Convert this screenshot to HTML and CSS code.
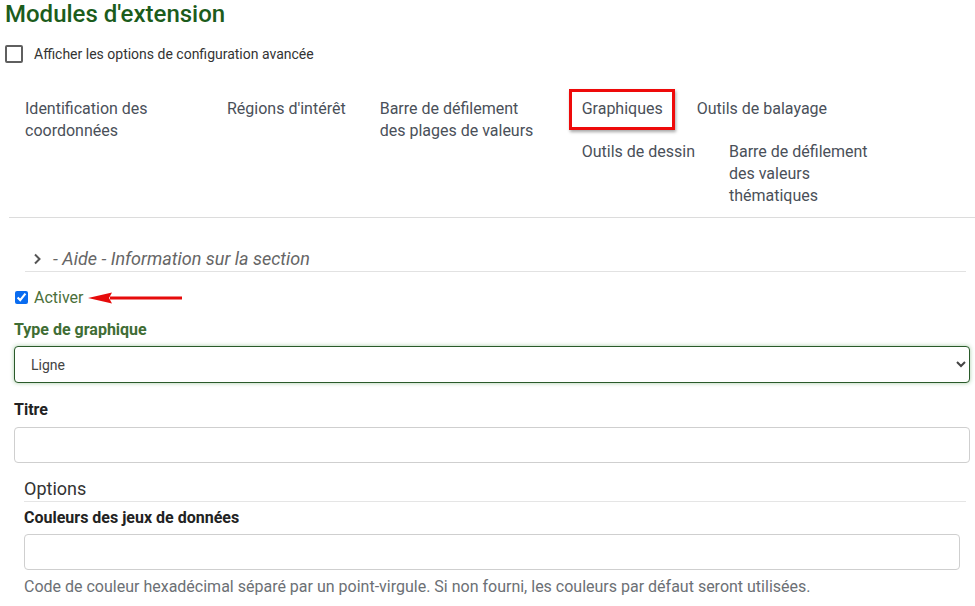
FILE: index.html
```html
<!DOCTYPE html>
<html lang="fr">
<head>
<meta charset="utf-8">
<title>Modules d'extension</title>
<link rel="stylesheet" href="styles.css">
</head>
<body>
<div class="page">
  <h1 class="title">Modules d'extension</h1>
  <label class="adv"><span class="adv-box"></span><span>Afficher les options de configuration avancée</span></label>

  <div class="tabs">
    <ul class="tab-list">
      <li class="tab tab-wide">Identification des<br>coordonnées</li>
      <li class="tab">Régions d'intérêt</li>
      <li class="tab tab-wide">Barre de défilement<br>des plages de valeurs</li>
      <li class="tab tab-active">Graphiques<span class="mark"></span></li>
      <li class="tab">Outils de balayage</li>
      <li class="tab">Outils de dessin</li>
      <li class="tab tab-wide">Barre de défilement<br>des valeurs<br>thématiques</li>
    </ul>
  </div>

  <div class="panel">
    <div class="aide">
      <svg class="chev" width="10" height="12" viewBox="0 0 10 12"><path d="M3 1.5 L7.5 6 L3 10.5" fill="none" stroke="#555" stroke-width="2"/></svg>
      <span class="aide-text">- Aide - Information sur la section</span>
    </div>

    <div class="enable">
      <input type="checkbox" class="enable-check" checked>
      <span class="enable-text">Activer</span>
      <svg class="arrow" width="100" height="16" viewBox="0 0 100 16">
        <path d="M24 6.5 L96 6.5 L96 9.5 L24 9.5 Z" fill="#e60b0b"/>
        <path d="M2 8 L26 2.5 L23 8 L26 13.5 Z" fill="#e60b0b"/>
      </svg>
    </div>

    <div class="field-label green">Type de graphique</div>
    <select class="fselect"><option>Ligne</option></select>

    <div class="field-label">Titre</div>
    <input type="text" class="finput titre-input">

    <div class="group">
      <div class="group-title">Options</div>
      <div class="field-label small">Couleurs des jeux de données</div>
      <input type="text" class="finput">
      <div class="hint">Code de couleur hexadécimal séparé par un point-virgule. Si non fourni, les couleurs par défaut seront utilisées.</div>
    </div>
  </div>
</div>
</body>
</html>
```

FILE: styles.css
```css
* { box-sizing: border-box; }
html, body { margin: 0; padding: 0; background: #fff; }
body { font-family: Roboto, "Noto Sans", Arial, sans-serif; color: #333; }

.page { padding: 0 5px; }

.title {
  margin: 0;
  font-size: 24px;
  line-height: 28px;
  font-weight: 500;
  color: #1c5c1c;
}

.adv {
  display: flex;
  align-items: center;
  gap: 11px;
  margin-top: 17px;
  font-size: 14px;
  line-height: 18px;
  color: #333;
}
.adv-box {
  width: 18px;
  height: 18px;
  border: 2px solid #5f5f5f;
  border-radius: 2px;
  flex: none;
}

.tabs {
  margin: 27px -5px 0 4px;
  border-bottom: 1px solid #dcdcdc;
  display: flow-root;
}
.tab-list {
  list-style: none;
  margin: 0;
  padding: 0 45px 0 0;
  display: flow-root;
}
.tab {
  float: left;
  padding: 8px 16px 8px 16px;
  margin: 0 2px 5px 0;
  font-size: 16px;
  line-height: 22px;
  color: #4a5059;
  white-space: nowrap;
}
.tab:last-child { margin-bottom: 2px; }
.tab-wide { width: 200px; }
.tab-active { position: relative; }
.mark {
  position: absolute;
  top: -1px;
  left: 3px;
  right: 4px;
  bottom: -2px;
  border: 3px solid #ee0a0a;
  box-shadow: 1px 2px 3px rgba(0,0,0,.35);
}

.panel { padding: 0 0 0 9px; }

.aide {
  display: flex;
  align-items: center;
  margin: 29px 4px 0 11px;
  padding-left: 7px;
  border-bottom: 1px solid #e2e2e2;
  height: 25px;
}
.chev { flex: none; }
.aide-text {
  margin-left: 11px;
  font-size: 18px;
  line-height: 24px;
  font-style: italic;
  color: #666;
}

.enable {
  display: flex;
  align-items: center;
  margin-top: 14px;
  height: 22px;
}
.enable-check {
  margin: 0 0 0 1px;
  width: 13px;
  height: 13px;
  accent-color: #0a6cf0;
}
.enable-text {
  margin-left: 6px;
  font-size: 16px;
  color: #4b6f3a;
}
.arrow { margin-left: 2px; margin-top: 1px; }

.field-label {
  margin-top: 12px;
  font-size: 16px;
  line-height: 20px;
  font-weight: 700;
  color: #222;
}
.field-label.green { color: #3f6d34; }

.fselect {
  display: block;
  width: 100%;
  height: 37px;
  margin-top: 6px;
  padding: 0 10px 0 12px;
  font-family: Roboto, Arial, sans-serif;
  font-size: 14px;
  color: #444;
  background: #fff;
  border: 1px solid #2a5a2a;
  border-radius: 4px;
  box-shadow: 0 0 4px rgba(60,140,60,.45);
  outline: none;
}
.fselect + .field-label { margin-top: 17px; }

.finput {
  display: block;
  width: 100%;
  height: 36px;
  margin-top: 8px;
  border: 1px solid #cfcfcf;
  border-radius: 4px;
  background: #fff;
  outline: none;
}
.titre-input { margin-top: 7px; }

.group { padding: 0 10px; margin-top: 14px; }
.group-title {
  font-size: 18px;
  line-height: 24px;
  color: #333;
  border-bottom: 1px solid #e5e5e5;
  margin-right: -6px;
}
.field-label.small { margin-top: 6px; }
.group .finput { margin-top: 6px; }
.hint {
  margin-top: 7px;
  font-size: 16px;
  line-height: 20px;
  color: #6c7075;
}
```
